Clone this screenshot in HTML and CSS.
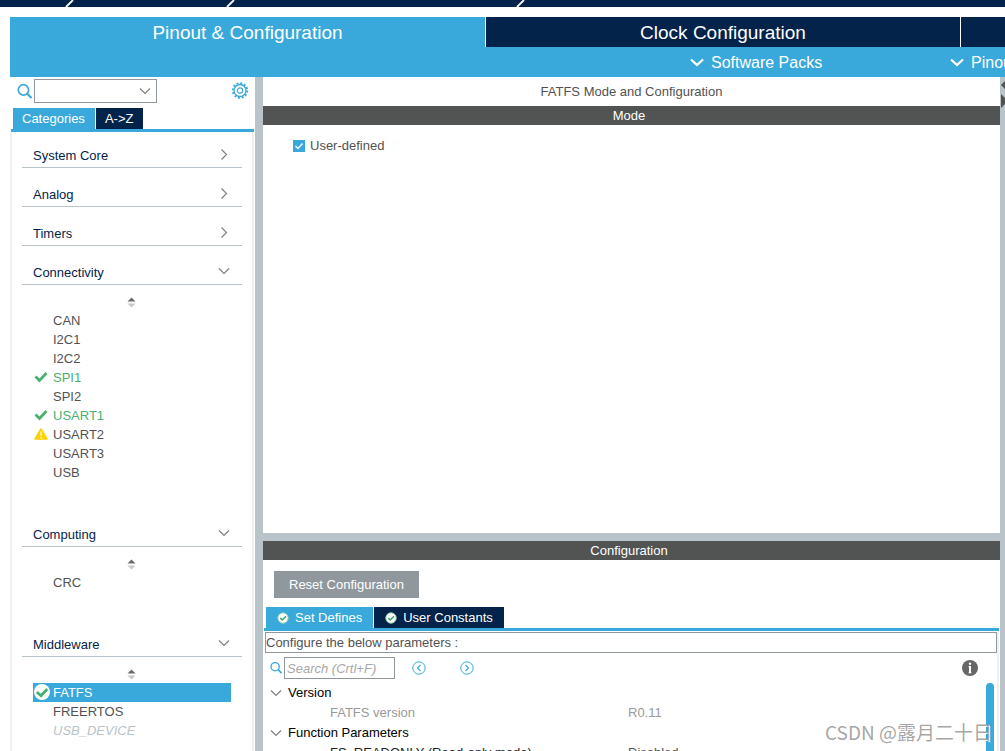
FILE: index.html
```html
<!DOCTYPE html>
<html lang="en">
<head>
<meta charset="utf-8">
<title>Pinout &amp; Configuration</title>
<link rel="stylesheet" href="styles.css">
</head>
<body>
<svg class="symbols" aria-hidden="true">
  <symbol id="chev-right" viewBox="0 0 12 12"><path d="M3.500 0.500 L8.500 5.500 L3.500 10.500" fill="none" stroke="#808080" stroke-width="1.200"/></symbol>
  <symbol id="chev-down" viewBox="0 0 12 12"><path d="M1 2.500 L6 7.500 L11 2.500" fill="none" stroke="#808080" stroke-width="1.200"/></symbol>
  <symbol id="chev-bold" viewBox="0 0 14 14"><path d="M1 4.500 L7 10 L13 4.500" fill="none" stroke="#fff" stroke-width="2.200"/></symbol>
  <symbol id="search" viewBox="0 0 14 14"><circle cx="6" cy="5.500" r="4.800" fill="none" stroke="#39a9dc" stroke-width="1.600"/><path d="M9.400 8.900 L13.500 13" stroke="#39a9dc" stroke-width="2"/></symbol>
  <symbol id="sorter" viewBox="0 0 9 11"><path d="M0.500 4.500 L4.500 0.500 L8.500 4.500Z" fill="#6b6b6b"/><path d="M0.500 6.500 L8.500 6.500 L4.500 10.500Z" fill="#c8c8c8"/></symbol>
  <symbol id="check" viewBox="0 0 14 12"><path d="M1.500 5.500 L5.500 9.500 L12.500 2" fill="none" stroke="#49b170" stroke-width="2.800"/></symbol>
  <symbol id="warn" viewBox="0 0 14 12"><path d="M7 1 L13 11 L1 11Z" fill="#ffd200" stroke="#ffd200" stroke-width="1.500" stroke-linejoin="round"/><path d="M7 3.500 V8 M7 9 V10.500" stroke="#fff" stroke-width="1.200"/></symbol>
  <symbol id="check-disc" viewBox="0 0 16 16"><circle cx="8" cy="8" r="8" fill="#fff"/><path d="M2.800 8 L7 11.700 L13.200 5" fill="none" stroke="#49b170" stroke-width="2.800"/></symbol>
  <symbol id="check-small" viewBox="0 0 12 12"><circle cx="6" cy="6" r="5.200" fill="#fff" stroke="#8fd0a8"/><path d="M3.200 6 L5.300 8 L9 4.300" fill="none" stroke="#3fa566" stroke-width="1.600"/></symbol>
</svg>
<div class="app">
  <div class="crumbs">
    <svg class="crumb-lines" width="600" height="7" aria-hidden="true"><path d="M66 7 L73 0 M227 7 L234 0 M517 7 L524 0" stroke="#fff" stroke-width="1.800"/></svg>
  </div>
  <header class="head">
    <nav class="main-tabs">
      <button class="main-tab active">Pinout &amp; Configuration</button>
      <button class="main-tab">Clock Configuration</button>
      <button class="main-tab" aria-label="Project Manager"></button>
    </nav>
    <div class="sub-bar">
      <button class="sub-btn"><svg width="14" height="14"><use href="#chev-bold"/></svg>Software Packs</button>
      <button class="sub-btn"><svg width="14" height="14"><use href="#chev-bold"/></svg>Pinout</button>
    </div>
  </header>
  <div class="work">
    <aside class="side">
      <div class="side-search">
        <svg width="15" height="15"><use href="#search"/></svg>
        <span class="combo"><select aria-label="Find peripheral"><option></option></select><svg width="12" height="12"><use href="#chev-down"/></svg></span>
        <button class="gear" aria-label="Settings"><svg width="18" height="18" viewBox="0 0 18 18"><circle cx="9" cy="8.500" r="7.300" fill="none" stroke="#39a9dc" stroke-width="1.800" stroke-dasharray="2 1.820"/><circle cx="9" cy="8.500" r="6" fill="#fff" stroke="#39a9dc" stroke-width="1.300"/><circle cx="9" cy="8.500" r="2.700" fill="none" stroke="#39a9dc" stroke-width="1.200"/></svg></button>
      </div>
      <div class="tabs side-tabs"><button class="tab active">Categories</button><button class="tab">A-&gt;Z</button></div>
      <div class="tree">
        <section><button class="cat">System Core<svg width="12" height="12"><use href="#chev-right"/></svg></button></section>
        <section><button class="cat">Analog<svg width="12" height="12"><use href="#chev-right"/></svg></button></section>
        <section><button class="cat">Timers<svg width="12" height="12"><use href="#chev-right"/></svg></button></section>
        <section><button class="cat">Connectivity<svg width="12" height="12"><use href="#chev-down"/></svg></button>
          <div class="cat-body">
            <div class="sort"><svg width="9" height="11"><use href="#sorter"/></svg></div>
            <ul>
              <li>CAN</li>
              <li>I2C1</li>
              <li>I2C2</li>
              <li class="ok"><svg width="14" height="12"><use href="#check"/></svg>SPI1</li>
              <li>SPI2</li>
              <li class="ok"><svg width="14" height="12"><use href="#check"/></svg>USART1</li>
              <li><svg width="14" height="12"><use href="#warn"/></svg>USART2</li>
              <li>USART3</li>
              <li>USB</li>
            </ul>
          </div>
        </section>
        <section><button class="cat">Computing<svg width="12" height="12"><use href="#chev-down"/></svg></button>
          <div class="cat-body">
            <div class="sort"><svg width="9" height="11"><use href="#sorter"/></svg></div>
            <ul><li>CRC</li></ul>
          </div>
        </section>
        <section><button class="cat">Middleware<svg width="12" height="12"><use href="#chev-down"/></svg></button>
          <div class="cat-body">
            <div class="sort"><svg width="9" height="11"><use href="#sorter"/></svg></div>
            <ul>
              <li class="selected"><svg width="16" height="16"><use href="#check-disc"/></svg>FATFS</li>
              <li>FREERTOS</li>
              <li class="off">USB_DEVICE</li>
            </ul>
          </div>
        </section>
      </div>
    </aside>
    <main class="panes">
      <section class="mode">
        <h1 class="title">FATFS Mode and Configuration</h1>
        <h2 class="bar">Mode</h2>
        <label class="check-row"><span class="box"><input type="checkbox" checked><svg width="12" height="12" viewBox="0 0 12 12"><path d="M2.500 6 L5 8.500 L9.500 3.500" fill="none" stroke="#fff" stroke-width="1.400"/></svg></span>User-defined</label>
      </section>
      <section class="config">
        <h2 class="bar">Configuration</h2>
        <button class="reset">Reset Configuration</button>
        <div class="tabs config-tabs">
          <button class="tab active"><svg width="12" height="12"><use href="#check-small"/></svg>Set Defines</button>
          <button class="tab"><svg width="12" height="12"><use href="#check-small"/></svg>User Constants</button>
        </div>
        <div class="config-body">
          <p class="hint">Configure the below parameters :</p>
          <div class="find">
            <svg width="12" height="12"><use href="#search"/></svg>
            <input type="text" placeholder="Search (Crtl+F)" aria-label="Search parameters">
            <button class="step" aria-label="Previous"><svg width="14" height="14" viewBox="0 0 14 14" fill="none" stroke="#39a9dc"><circle cx="7" cy="7" r="6.200"/><path d="M8.500 4 L5.500 7 L8.500 10" stroke-width="1.200"/></svg></button>
            <button class="step" aria-label="Next"><svg width="14" height="14" viewBox="0 0 14 14" fill="none" stroke="#39a9dc"><circle cx="7" cy="7" r="6.200"/><path d="M5.500 4 L8.500 7 L5.500 10" stroke-width="1.200"/></svg></button>
            <button class="info" aria-label="Information"><svg width="16" height="16" viewBox="0 0 16 16"><circle cx="8" cy="8" r="8" fill="#666"/><path d="M8 6 V13" fill="none" stroke="#fff" stroke-width="2"/><path d="M6.500 6.500 H8 M6.500 12.800 H9.500" stroke="#fff"/><circle cx="8" cy="3.800" r="1.200" fill="#fff"/></svg></button>
          </div>
          <div class="params">
            <table>
              <tbody>
                <tr><th colspan="2"><svg width="12" height="12"><use href="#chev-down"/></svg>Version</th></tr>
                <tr class="fixed"><td>FATFS version</td><td>R0.11</td></tr>
                <tr><th colspan="2"><svg width="12" height="12"><use href="#chev-down"/></svg>Function Parameters</th></tr>
                <tr><td>FS_READONLY (Read-only mode)</td><td>Disabled</td></tr>
              </tbody>
            </table>
            <div class="thumb"></div>
          </div>
        </div>
      </section>
    </main>
    <div class="edge"><svg width="10" height="32" viewBox="0 0 10 32" aria-hidden="true"><path d="M0 8 L6 2 V14Z M0 17 V31 L7 24Z" fill="#525252"/></svg></div>
  </div>
  <div class="watermark">CSDN @露月二十日</div>
</div>
</body>
</html>
```
FILE: styles.css
```css
* { box-sizing: border-box; }
body {
  margin: 0;
  font: 13px/19px "Liberation Sans", Arial, sans-serif;
  color: #525252;
  background: #fff;
}
button {
  font: inherit;
  color: inherit;
  background: none;
  border: 0;
  padding: 0;
}
svg { display: block; flex: none; }
h1, h2, p, ul { margin: 0; padding: 0; font: inherit; }
ul { list-style: none; }
.symbols { position: absolute; width: 0; height: 0; }
.app {
  position: relative;
  display: flex;
  flex-direction: column;
  height: 100vh;
  overflow: hidden;
}
.crumbs { flex: none; background: #03234b; overflow: hidden; }
.head {
  flex: none;
  margin: 10px 0 0 10px;
  background: #39a9dc;
  color: #fff;
}
.main-tabs {
  display: grid;
  grid-template-columns: 475fr 475fr 45fr;
}
.main-tab {
  height: 30px;
  background: #03234b;
  border-left: 1px solid #fff;
  font-size: 19px;
  color: #fff;
}
.main-tab.active { background: #39a9dc; border-left: 0; }
.sub-bar {
  display: grid;
  grid-template-columns: minmax(0, 680fr) minmax(0, 260fr) minmax(0, 55fr);
  height: 30px;
  overflow: hidden;
}
.sub-btn {
  display: flex;
  align-items: center;
  gap: 7px;
  font-size: 16px;
  white-space: nowrap;
}
.sub-btn:first-child { grid-column: 2; }
.work { flex: 1; display: flex; min-height: 0; }
.side {
  flex: none;
  width: 255px;
  padding: 2px 1px 0 10px;
  display: flex;
  flex-direction: column;
}
.side-search {
  display: flex;
  align-items: center;
  padding: 0 5px 0 7px;
  gap: 2px;
  margin-bottom: 5px;
}
.combo { position: relative; width: 123px; }
.combo select {
  display: block;
  width: 100%;
  height: 24px;
  appearance: none;
  background: #fff;
  border: 1px solid #90989e;
}
.combo svg { position: absolute; right: 6px; top: 7px; }
.gear { margin-left: auto; }
.tabs {
  display: flex;
  gap: 1px;
  border-bottom: 3px solid #39a9dc;
}
.tab {
  display: flex;
  align-items: center;
  gap: 6px;
  height: 21px;
  color: #fff;
  background: #03234b;
}
.tab.active { background: #39a9dc; }
.side-tabs { margin-left: 1px; padding-left: 2px; }
.side-tabs .tab { padding: 0 10px 0 9px; }
.tree {
  flex: 1;
  min-height: 0;
  overflow: hidden;
  display: flex;
  flex-direction: column;
  gap: 11px;
  padding: 8px 10px 0;
  border: solid #f0f0f0;
  border-width: 0 2px;
}
.cat {
  display: flex;
  align-items: center;
  justify-content: space-between;
  width: 100%;
  height: 28px;
  padding: 3px 12px 0 11px;
  border-bottom: 1px solid #b9c4ca;
  color: #03234b;
}
.cat-body { padding: 0 11px 26px; }
.sort { display: flex; justify-content: center; height: 26px; padding: 12px 2px 0 0; }
.cat-body li {
  position: relative;
  height: 19px;
  padding-left: 20px;
}
.cat-body li svg { position: absolute; left: 1px; top: 3px; }
.cat-body .ok { color: #49b170; }
.cat-body .selected { background: #39a9dc; color: #fff; }
.cat-body .selected svg { top: 1px; }
.cat-body .off { color: #b9c4ca; font-style: italic; }
.panes {
  flex: 1;
  min-width: 0;
  display: grid;
  grid-template-rows: minmax(0, 456fr) minmax(0, 210fr);
  gap: 8px;
  background: #b9c4ca;
  border-left: 8px solid #b9c4ca;
}
.mode, .config { background: #fff; overflow: hidden; }
.title { text-align: center; line-height: 29px; }
.bar {
  padding-right: 5px;
  background: #525453;
  color: #fff;
  text-align: center;
  line-height: 19px;
}
.check-row {
  display: flex;
  align-items: center;
  gap: 5px;
  padding: 11px 30px;
}
.box { position: relative; }
.box input {
  display: block;
  margin: 0;
  width: 12px;
  height: 12px;
  appearance: none;
  border: 1px solid #39a9dc;
}
.box input:checked { background: #39a9dc; }
.box svg { position: absolute; left: 0; top: 0; }
.config { display: flex; flex-direction: column; }
.reset {
  flex: none;
  align-self: flex-start;
  height: 27px;
  margin: 11px;
  margin-bottom: 9px;
  padding: 0 15px;
  background: #90989e;
  color: #fff;
}
.config-tabs { flex: none; margin: 0 1px; padding-left: 2px; }
.config-tabs .tab { padding: 0 11px; }
.config-body {
  flex: 1;
  min-height: 0;
  display: flex;
  flex-direction: column;
  margin: 0 1px;
  padding: 1px 0 0 1px;
  border-right: 2px solid #f0f0f0;
}
.hint {
  flex: none;
  border: 1px solid #90989e;
}
.find {
  flex: none;
  display: flex;
  align-items: center;
  height: 30px;
  padding: 0 19px 0 5px;
}
.find input {
  width: 111px;
  height: 22px;
  margin: 0 17px 0 2px;
  padding: 0 2px;
  border: 1px solid #90989e;
  font: inherit;
  font-style: italic;
}
.find input::placeholder { color: #a8a8a8; opacity: 1; }
.step { margin-right: 34px; }
.info { margin-left: auto; }
.params {
  flex: 1;
  min-height: 0;
  overflow: hidden;
  display: flex;
  padding-right: 3px;
}
table { flex: 1; align-self: flex-start; border-collapse: collapse; table-layout: fixed; }
td, th { height: 20px; padding: 0; line-height: 20px; font-weight: normal; text-align: left; }
th { color: #000; }
th svg { display: inline-block; vertical-align: middle; margin: 0 6px 0 5px; }
td:first-child { width: 363px; padding-left: 65px; color: #222; }
.fixed td, .fixed td:first-child { color: #999; }
.thumb { width: 8px; border-radius: 4px 4px 0 0; background: #39a9dc; }
.edge {
  flex: none;
  width: 5px;
  padding: 0 0 0 1px;
  overflow: hidden;
  background: #b9c4ca;
}
.watermark {
  position: absolute;
  right: 13px;
  bottom: 6px;
  font: 19px/26px "Noto Sans CJK SC", sans-serif;
  color: rgba(150, 150, 150, 0.85);
  text-shadow: 1px 1px 0 #fff;
}
```
